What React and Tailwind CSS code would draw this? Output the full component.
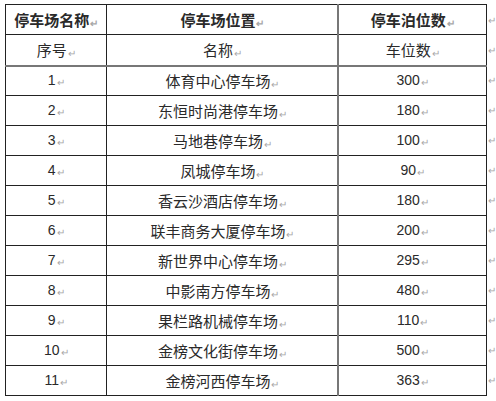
import React from "react";

const rows = [
  ["1", "体育中心停车场", "300"],
  ["2", "东恒时尚港停车场", "180"],
  ["3", "马地巷停车场", "100"],
  ["4", "凤城停车场", "90"],
  ["5", "香云沙酒店停车场", "180"],
  ["6", "联丰商务大厦停车场", "200"],
  ["7", "新世界中心停车场", "295"],
  ["8", "中影南方停车场", "480"],
  ["9", "果栏路机械停车场", "110"],
  ["10", "金榜文化街停车场", "500"],
  ["11", "金榜河西停车场", "363"],
];

// Word 段落标记
function Mark() {
  return <span className="text-[10px] text-[#a8a8a8] ml-px align-[-1px]">↵</span>;
}

const cjk = { fontFamily: '"Noto Sans CJK SC", "Liberation Sans", sans-serif' };
const num = { fontFamily: '"Liberation Sans", "Noto Sans CJK SC", sans-serif' };

export default function App() {
  return (
    <div className="w-[496px] h-[401px] bg-white overflow-hidden pt-[4px] pl-[5px] flex items-start" style={cjk}>
      <table className="border-collapse border-[1.5px] border-[#222] text-[#2a2a2a] table-fixed">
        <colgroup>
          <col className="w-[102px]" />
          <col className="w-[233px]" />
          <col className="w-[149px]" />
        </colgroup>
        <tbody>
          <tr className="h-[30px]">
            <td className="border border-[#222] text-center text-[15px] font-bold leading-none">停车场名称<Mark /></td>
            <td className="border border-[#222] border-r-2 border-r-[#777] text-center text-[15px] font-bold leading-none">停车场位置<Mark /></td>
            <td className="border border-[#222] text-center text-[15px] font-bold leading-none">停车泊位数<Mark /></td>
          </tr>
          <tr className="h-[31px]">
            <td className="border border-[#222] border-b-2 border-b-[#777] text-center text-[15px] leading-none">序号<Mark /></td>
            <td className="border border-[#222] border-b-2 border-b-[#777] border-r-2 border-r-[#777] text-center text-[15px] leading-none">名称<Mark /></td>
            <td className="border border-[#222] border-b-2 border-b-[#777] text-center text-[15px] leading-none">车位数<Mark /></td>
          </tr>
          {rows.map((r) => (
            <tr key={r[0]} className="h-[30px]">
              <td className="border border-[#222] text-center text-[14px] leading-none" style={num}>{r[0]}<Mark /></td>
              <td className="border border-[#222] border-r-2 border-r-[#777] text-center text-[15px] leading-none">{r[1]}<Mark /></td>
              <td className="border border-[#222] text-center text-[14px] leading-none" style={num}>{r[2]}<Mark /></td>
            </tr>
          ))}
        </tbody>
      </table>
      <div className="flex flex-col pt-[1px]">
        {Array.from({ length: 13 }).map((_, i) => (
          <div key={i} className="h-[30px] flex items-center pl-[1px] text-[10px] text-[#a8a8a8] leading-none">↵</div>
        ))}
      </div>
    </div>
  );
}
